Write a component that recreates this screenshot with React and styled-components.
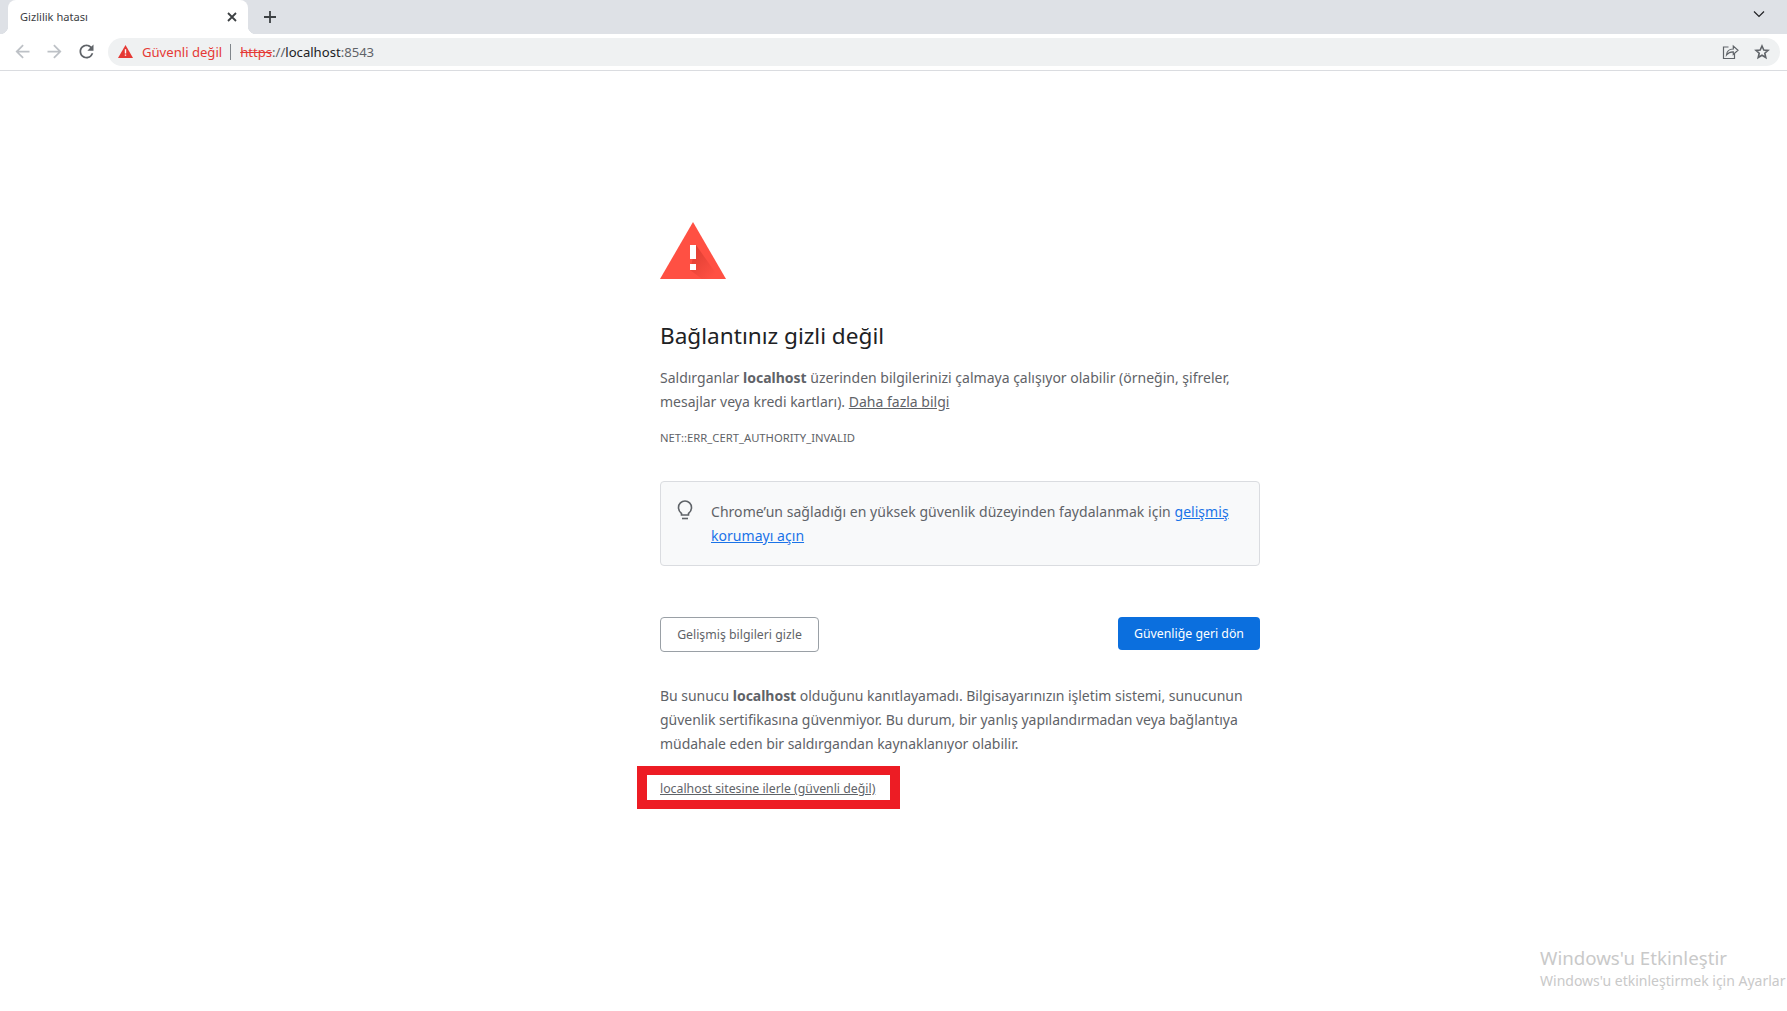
import React from 'react'
import styled, { createGlobalStyle } from 'styled-components'

const Global = createGlobalStyle`
  html, body { margin: 0; padding: 0; background: #fff; height: 100%; overflow: hidden; }
  body { font-family: "Noto Sans", "Open Sans", sans-serif; }
  * { box-sizing: border-box; }
`

const App = () => {
  return (
    <Page>
      <Global />
      <TabStrip>
        <Tab>
          <TabTitle>Gizlilik hatası</TabTitle>
          <svg width="12" height="12" viewBox="0 0 12 12"><path d="M2 2l8 8M10 2l-8 8" stroke="#3c4043" strokeWidth="1.8" fill="none" /></svg>
        </Tab>
        <NewTab>
          <svg width="14" height="14" viewBox="0 0 14 14"><path d="M7 1v12M1 7h12" stroke="#3c4043" strokeWidth="1.8" fill="none" /></svg>
        </NewTab>
        <TabSearch>
          <svg width="12" height="8" viewBox="0 0 12 8"><path d="M1 1.5l5 5 5-5" stroke="#202124" strokeWidth="1.2" fill="none" /></svg>
        </TabSearch>
      </TabStrip>

      <Toolbar>
        <NavButton>
          <svg width="21" height="21" viewBox="0 0 24 24" fill="#bdc1c6"><path d="M20 11H7.83l5.59-5.59L12 4l-8 8 8 8 1.41-1.41L7.83 13H20v-2z" /></svg>
        </NavButton>
        <NavButton>
          <svg width="21" height="21" viewBox="0 0 24 24" fill="#bdc1c6"><path d="M4 11h12.17l-5.59-5.59L12 4l8 8-8 8-1.41-1.41L16.17 13H4v-2z" /></svg>
        </NavButton>
        <NavButton>
          <svg width="21" height="21" viewBox="0 0 24 24" fill="#5f6368"><path d="M17.65 6.35A7.958 7.958 0 0012 4c-4.42 0-7.99 3.58-7.99 8s3.57 8 7.99 8c3.73 0 6.84-2.55 7.73-6h-2.08A5.99 5.99 0 0112 18c-3.31 0-6-2.69-6-6s2.69-6 6-6c1.66 0 3.14.69 4.22 1.78L13 11h7V4l-2.35 2.35z" /></svg>
        </NavButton>
        <Omnibox>
          <svg width="15" height="13" viewBox="0 0 15 13"><path d="M7.5 0L15 13H0z" fill="#e53935" /><path d="M6.8 4.2h1.4v4.2H6.8zM6.8 9.4h1.4v1.4H6.8z" fill="#fff" /></svg>
          <NotSecure>Güvenli değil</NotSecure>
          <Divider />
          <Url><s>https</s>://<b>localhost</b>:8543</Url>
          <OmniIcons>
            <svg width="17" height="17" viewBox="0 0 17 17" fill="none" stroke="#5f6368" strokeWidth="1.2">
              <path d="M6.5 4H1.5v11.5h11V11" />
              <path d="M4.5 12c.3-3.6 3-6 6.8-6V3l4.7 4.3-4.7 4.2V8.8c-2.8-.1-5 .9-6.8 3.2z" />
            </svg>
            <svg width="16" height="16" viewBox="0 0 16 16" fill="none" stroke="#5f6368" strokeWidth="1.6">
              <path d="M8 2l1.8 4 4.2.4-3.2 2.8 1 4.3L8 11.2l-3.8 2.3 1-4.3L2 6.4 6.2 6z" />
            </svg>
          </OmniIcons>
        </Omnibox>
      </Toolbar>

      <Main>
        <svg width="66" height="58" viewBox="0 0 66 58">
          <defs>
            <linearGradient id="triShade" x1="0.1" y1="0.1" x2="0.8" y2="0.9">
              <stop offset="0" stopColor="#b5281e" stopOpacity="0.45" />
              <stop offset="1" stopColor="#b5281e" stopOpacity="0" />
            </linearGradient>
          </defs>
          <path d="M33 0l33 57H0z" fill="#ff5043" />
          <path d="M36 23l24 34H42L30 48z" fill="url(#triShade)" />
          <path d="M30 23h6v14h-6zM30 42h6v6h-6z" fill="#fff" />
        </svg>
        <Heading>Bağlantınız gizli değil</Heading>
        <Text>
          Saldırganlar <strong>localhost</strong> üzerinden bilgilerinizi çalmaya çalışıyor olabilir (örneğin, şifreler,
          mesajlar veya kredi kartları). <PlainLink>Daha fazla bilgi</PlainLink>
        </Text>
        <ErrorCode>NET::ERR_CERT_AUTHORITY_INVALID</ErrorCode>
        <Promo>
          <BulbIcon width="16" height="22" viewBox="0 0 16 22" fill="none" stroke="#5f6368" strokeWidth="1.6">
            <path d="M4.500 14.500C2.800 13.200 1.500 11.300 1.500 8.500a6.500 6.500 0 0113 0c0 2.800-1.300 4.700-3 6v1.500h-7z" />
            <path d="M5 19.500h6" />
          </BulbIcon>
          <PromoText>
            Chrome’un sağladığı en yüksek güvenlik düzeyinden faydalanmak için <BlueLink>gelişmiş korumayı açın</BlueLink>
          </PromoText>
        </Promo>
        <Buttons>
          <HideButton>Gelişmiş bilgileri gizle</HideButton>
          <BackButton>Güvenliğe geri dön</BackButton>
        </Buttons>
        <Explanation>
          Bu sunucu <strong>localhost</strong> olduğunu kanıtlayamadı. Bilgisayarınızın işletim sistemi, sunucunun
          güvenlik sertifikasına güvenmiyor. Bu durum, bir yanlış yapılandırmadan veya bağlantıya
          müdahale eden bir saldırgandan kaynaklanıyor olabilir.
        </Explanation>
        <ProceedRow>
          <ProceedLink>localhost sitesine ilerle (güvenli değil)</ProceedLink>
        </ProceedRow>
      </Main>

      <Watermark>
        <WatermarkTitle>Windows'u Etkinleştir</WatermarkTitle>
        <WatermarkSub>Windows'u etkinleştirmek için Ayarlar</WatermarkSub>
      </Watermark>
    </Page>
  )
}

const Page = styled.div`
  position: relative;
  height: 1011px;
  overflow: hidden;
  background: #fff;
`

const TabStrip = styled.div`
  display: flex;
  height: 34px;
  background: #dee1e6;
  padding-left: 8px;
`

const Tab = styled.div`
  position: relative;
  width: 240px;
  height: 34px;
  background: #fff;
  border-radius: 8px 8px 0 0;
  display: flex;
  align-items: center;
  justify-content: space-between;
  padding: 0 10px 1px 12px;

  &::before, &::after {
    content: '';
    position: absolute;
    bottom: 0;
    width: 8px;
    height: 8px;
  }
  &::before {
    left: -8px;
    background: radial-gradient(circle at 0 0, transparent 8px, #fff 8.5px);
  }
  &::after {
    right: -8px;
    background: radial-gradient(circle at 100% 0, transparent 8px, #fff 8.5px);
  }
`

const TabTitle = styled.span`
  font-size: 11.1px;
  color: #3c4043;
`

const NewTab = styled.div`
  margin-left: 15px;
  display: flex;
  align-items: center;
`

const TabSearch = styled.div`
  margin-left: auto;
  margin-right: 22px;
  padding-bottom: 7px;
  display: flex;
  align-items: center;
`

const Toolbar = styled.div`
  height: 37px;
  background: #fff;
  border-bottom: 1px solid #dadce0;
  display: flex;
  align-items: center;
  padding: 0 7px 1px 6px;
`

const NavButton = styled.div`
  width: 32px;
  display: flex;
  justify-content: center;
`

const Omnibox = styled.div`
  flex: 1;
  height: 28px;
  margin-left: 6px;
  background: #eff1f2;
  border-radius: 14px;
  display: flex;
  align-items: center;
  padding: 0 10px 0 10px;
`

const NotSecure = styled.span`
  margin-left: 9px;
  font-size: 13.1px;
  color: #e53935;
`

const Divider = styled.span`
  width: 1px;
  height: 16px;
  margin: 0 9px 0 8px;
  background: #80868b;
`

const Url = styled.span`
  font-size: 13.1px;
  color: #5f6368;

  s { color: #e53935; }
  b { font-weight: 400; color: #202124; }
`

const OmniIcons = styled.div`
  margin-left: auto;
  display: flex;
  align-items: center;
  gap: 15px;
`

const Main = styled.main`
  width: 600px;
  margin-left: 660px;
  padding-top: 151px;

  > svg { display: block; }
`

const Heading = styled.h1`
  margin: 40px 0 14px;
  font-size: 22.6px;
  font-weight: 400;
  line-height: 32px;
  color: #202124;
`

const Text = styled.p`
  margin: 0;
  font-size: 14px;
  line-height: 24px;
  color: #5f6368;

  strong { font-weight: 700; color: #5f6368; }
`

const Explanation = styled(Text)`
  margin-top: 32px;
  letter-spacing: -0.03px;
`

const PlainLink = styled.a`
  color: #5f6368;
  text-decoration: underline;
`

const ErrorCode = styled.div`
  margin-top: 16px;
  font-size: 11.25px;
  line-height: 16px;
  color: #5f6368;
`

const Promo = styled.div`
  height: 85px;
  margin-top: 35px;
  background: #f8f9fa;
  border: 1px solid #dadce0;
  border-radius: 4px;
  display: flex;
  padding: 17px 20px 0 16px;
`

const BulbIcon = styled.svg`
  flex: none;
`

const PromoText = styled.div`
  margin: 1px 0 0 18px;
  font-size: 14px;
  line-height: 24px;
  letter-spacing: 0.04px;
  color: #5f6368;
`

const BlueLink = styled.a`
  color: #1a73e8;
  text-decoration: underline;
`

const Buttons = styled.div`
  margin-top: 51px;
  display: flex;
  justify-content: space-between;
  align-items: flex-start;
`

const HideButton = styled.button`
  width: 159px;
  height: 35px;
  padding: 0;
  background: #fff;
  border: 1px solid #9aa0a6;
  border-radius: 4px;
  font: 12.3px "Noto Sans", sans-serif;
  color: #5f6368;
`

const BackButton = styled.button`
  width: 142px;
  height: 33px;
  padding: 0;
  background: #0b6fde;
  border: none;
  border-radius: 4px;
  font: 12.3px "Noto Sans", sans-serif;
  color: #fff;
`

const ProceedRow = styled.div`
  width: 263px;
  height: 43px;
  margin: 10px 0 0 -23px;
  border: 9px solid #ed1c24;
  border-left-width: 10px;
  border-right-width: 10px;
  display: flex;
  align-items: center;
  padding: 2px 0 0 13px;
`

const ProceedLink = styled.a`
  font-size: 12.3px;
  color: #5f6368;
  text-decoration: underline;
`

const Watermark = styled.div`
  position: absolute;
  left: 1540px;
  top: 944px;
  color: #c9c9c9;
  white-space: nowrap;
`

const WatermarkTitle = styled.div`
  font-size: 18.7px;
  line-height: 28px;
`

const WatermarkSub = styled.div`
  font-size: 14px;
  line-height: 18px;
`

export default App
